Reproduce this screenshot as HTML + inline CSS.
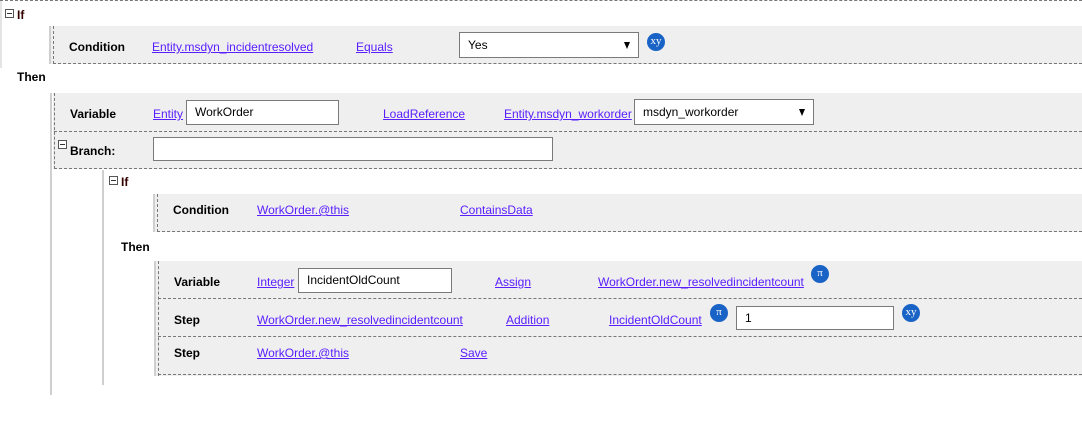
<!DOCTYPE html>
<html><head><meta charset="utf-8"><style>
*{margin:0;padding:0;box-sizing:border-box}
body{width:1082px;height:428px;background:#fff;position:relative;overflow:hidden;font-family:"Liberation Sans",sans-serif;font-size:12px;color:#000}
.a{position:absolute}
.g{position:absolute;background:#efefef}
.bar{position:absolute;background:#cfcfcf;width:2px}
.dl{position:absolute;border-left:1px dashed #777;width:0}
.dh{position:absolute;border-top:1px dashed #777;height:0}
.b{position:absolute;font-weight:bold;line-height:14px;margin-top:1px}
.l{position:absolute;color:#5a1fff;text-decoration:underline;line-height:14px;white-space:nowrap;margin-top:1px}
.in{position:absolute;background:#fff;border:1px solid #7a7a7a;padding-left:8px;line-height:22px;font-size:12px}
.sel{position:absolute;background:#fff;border:1px solid #7a7a7a;padding-left:8px;font-size:12px}
.sel:after{content:"";position:absolute;right:8px;top:9px;border-left:3.5px solid transparent;border-right:3.5px solid transparent;border-top:7px solid #000}
.ic{position:absolute;width:18px;height:18px;border-radius:50%;background:#1a63c6;color:#fff;font-family:"Liberation Serif",serif;font-size:11px;text-align:center;line-height:16px}
.mx{position:absolute;width:9px;height:9px;border:1px solid #555;background:#fff}
.mx:after{content:"";position:absolute;left:1px;right:1px;top:3px;height:1px;background:#333}
</style></head><body>
<div class="dh" style="left:0;top:0;width:1082px"></div>
<div class="a" style="left:0;top:1px;width:2px;height:67px;background:#e4e4e4"></div>
<div class="mx" style="left:5px;top:9px"></div>
<div class="b" style="left:17px;top:7px;color:#300">If</div>

<div class="g" style="left:49px;top:26px;width:1033px;height:38px"></div>
<div class="bar" style="left:49px;top:26px;height:38px"></div>
<div class="dl" style="left:53px;top:26px;height:38px"></div>
<div class="dh" style="left:53px;top:63px;width:1029px"></div>
<div class="b" style="left:69px;top:39px">Condition</div>
<div class="l" style="left:152px;top:39px">Entity.msdyn_incidentresolved</div>
<div class="l" style="left:356px;top:39px">Equals</div>
<div class="sel" style="left:459px;top:32px;width:180px;height:26px;line-height:24px">Yes</div>
<div class="ic" style="left:647px;top:33px">xy</div>

<div class="b" style="left:17px;top:69px">Then</div>
<div class="bar" style="left:50px;top:93px;height:302px"></div>

<div class="g" style="left:53px;top:93px;width:1029px;height:76px"></div>
<div class="dl" style="left:54px;top:93px;height:76px"></div>
<div class="dh" style="left:54px;top:131px;width:1028px"></div>
<div class="dh" style="left:54px;top:168px;width:1028px"></div>
<div class="b" style="left:70px;top:106px">Variable</div>
<div class="l" style="left:153px;top:106px">Entity</div>
<div class="in" style="left:186px;top:100px;width:153px;height:25px">WorkOrder</div>
<div class="l" style="left:383px;top:106px">LoadReference</div>
<div class="l" style="left:504px;top:106px">Entity.msdyn_workorder</div>
<div class="sel" style="left:634px;top:99px;width:180px;height:26px;line-height:24px">msdyn_workorder</div>
<div class="mx" style="left:58px;top:140px"></div>
<div class="b" style="left:70px;top:143px">Branch:</div>
<div class="in" style="left:153px;top:137px;width:400px;height:24px"></div>

<div class="bar" style="left:102px;top:170px;height:215px"></div>
<div class="mx" style="left:109px;top:176px"></div>
<div class="b" style="left:121px;top:174px;color:#300">If</div>
<div class="g" style="left:153px;top:194px;width:929px;height:38px"></div>
<div class="bar" style="left:153px;top:194px;height:38px"></div>
<div class="dl" style="left:157px;top:194px;height:38px"></div>
<div class="dh" style="left:157px;top:231px;width:925px"></div>
<div class="b" style="left:173px;top:202px">Condition</div>
<div class="l" style="left:257px;top:202px">WorkOrder.@this</div>
<div class="l" style="left:460px;top:202px">ContainsData</div>

<div class="b" style="left:121px;top:239px">Then</div>
<div class="g" style="left:154px;top:261px;width:928px;height:115px"></div>
<div class="bar" style="left:154px;top:261px;height:115px"></div>
<div class="dl" style="left:158px;top:261px;height:115px"></div>
<div class="dh" style="left:158px;top:298px;width:924px"></div>
<div class="dh" style="left:158px;top:336px;width:924px"></div>
<div class="dh" style="left:158px;top:374px;width:924px"></div>
<div class="b" style="left:174px;top:274px">Variable</div>
<div class="l" style="left:257px;top:274px">Integer</div>
<div class="in" style="left:298px;top:268px;width:154px;height:25px">IncidentOldCount</div>
<div class="l" style="left:495px;top:274px">Assign</div>
<div class="l" style="left:598px;top:274px">WorkOrder.new_resolvedincidentcount</div>
<div class="ic" style="left:811px;top:265px">π</div>
<div class="b" style="left:174px;top:312px">Step</div>
<div class="l" style="left:257px;top:312px">WorkOrder.new_resolvedincidentcount</div>
<div class="l" style="left:506px;top:312px">Addition</div>
<div class="l" style="left:609px;top:312px">IncidentOldCount</div>
<div class="ic" style="left:710px;top:304px">π</div>
<div class="in" style="left:736px;top:306px;width:158px;height:24px">1</div>
<div class="ic" style="left:902px;top:304px">xy</div>
<div class="b" style="left:174px;top:345px">Step</div>
<div class="l" style="left:257px;top:345px">WorkOrder.@this</div>
<div class="l" style="left:460px;top:345px">Save</div>
</body></html>
